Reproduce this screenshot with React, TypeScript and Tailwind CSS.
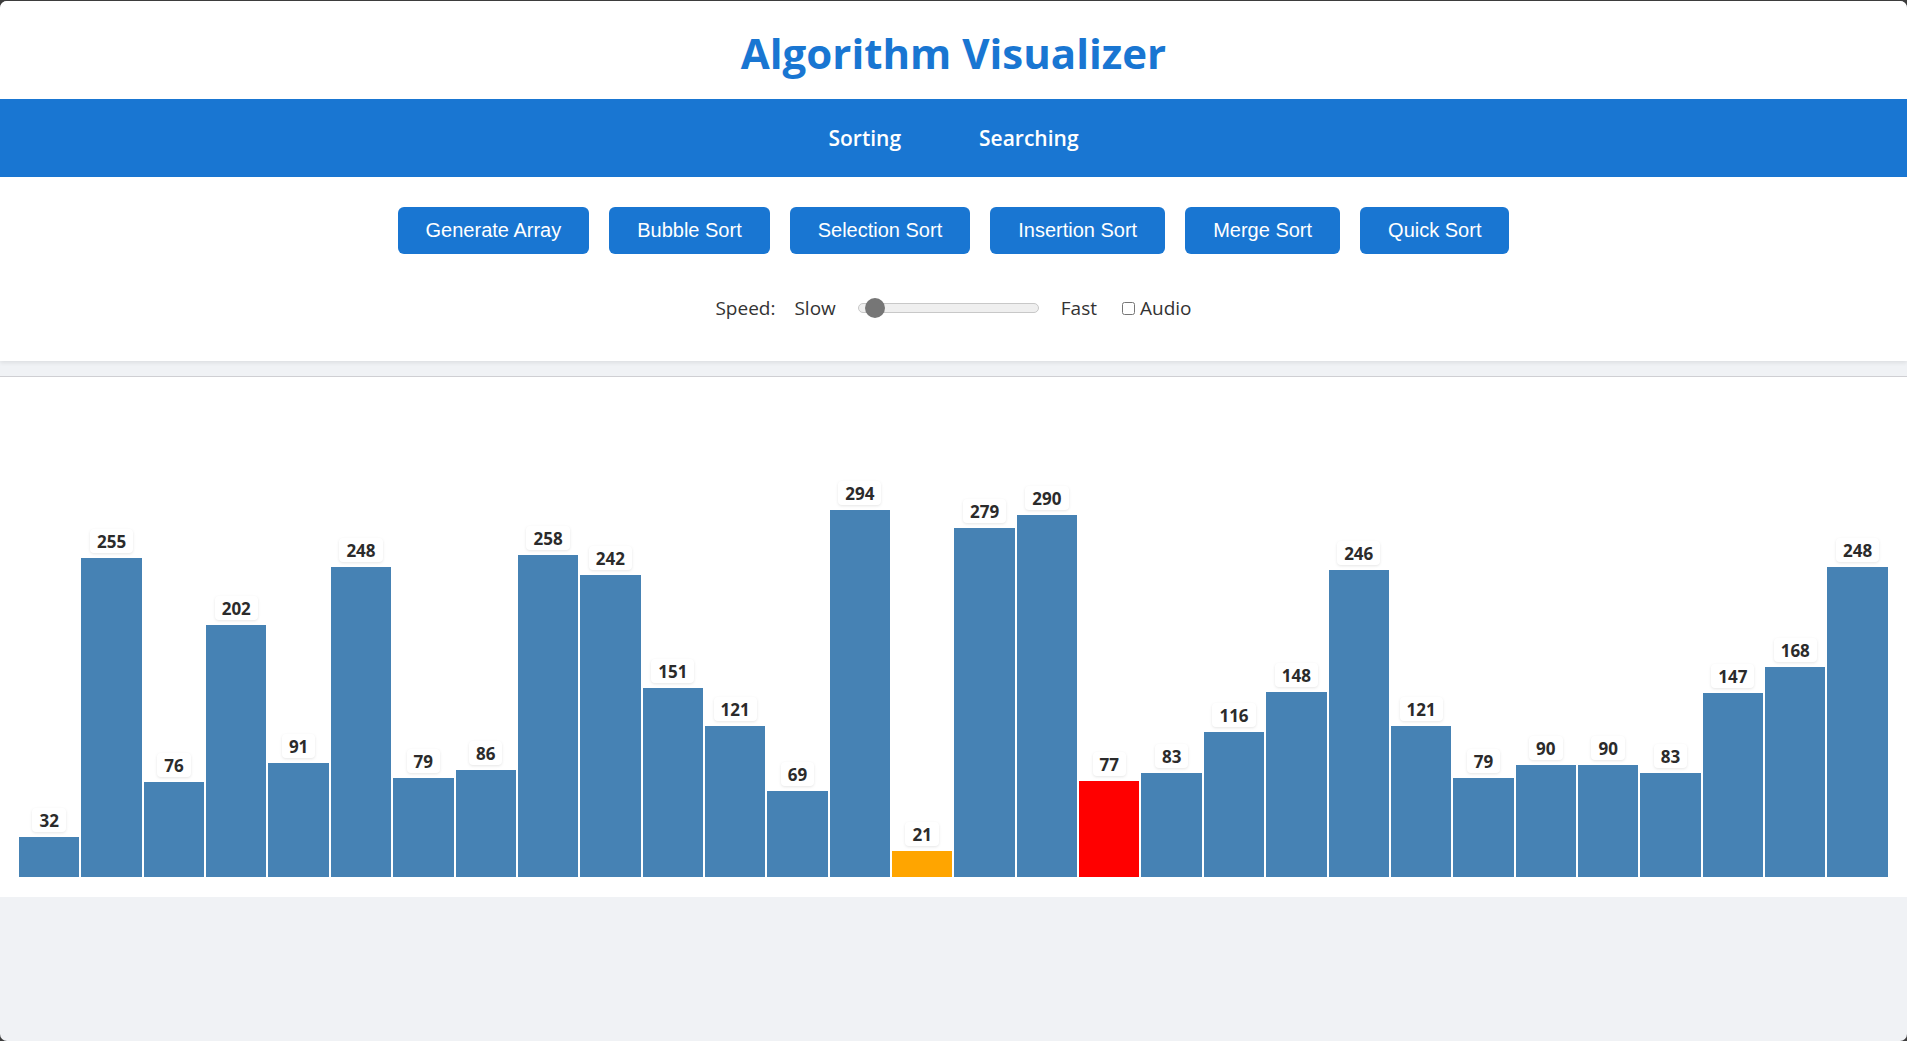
const bars: { v: number; c?: string }[] = [
  { v: 32 }, { v: 255 }, { v: 76 }, { v: 202 }, { v: 91 }, { v: 248 },
  { v: 79 }, { v: 86 }, { v: 258 }, { v: 242 }, { v: 151 }, { v: 121 },
  { v: 69 }, { v: 294 }, { v: 21, c: "bg-[#ffa500]" }, { v: 279 }, { v: 290 },
  { v: 77, c: "bg-[#ff0000]" }, { v: 83 }, { v: 116 }, { v: 148 }, { v: 246 },
  { v: 121 }, { v: 79 }, { v: 90 }, { v: 90 }, { v: 83 }, { v: 147 },
  { v: 168 }, { v: 248 },
];

const buttons = ["Generate Array", "Bubble Sort", "Selection Sort", "Insertion Sort", "Merge Sort", "Quick Sort"];

export default function App() {
  return (
    <div className="h-[1041px] bg-[#3d3d3d] pt-px" style={{ fontFamily: '"Open Sans", sans-serif' }}>
      <div className="flex h-full flex-col overflow-hidden rounded-[7px] bg-[#f0f2f5]">
        <header className="flex h-[98px] items-center justify-center bg-white pt-[4px]">
          <h1 className="text-[42px] font-bold text-[#1976d2]">Algorithm Visualizer</h1>
        </header>

        <nav className="flex h-[78px] items-center justify-center gap-[78px] bg-[#1976d2] pt-[2px] text-[21px] font-semibold text-white">
          <span>Sorting</span>
          <span>Searching</span>
        </nav>

        <section className="flex h-[184px] flex-col items-center bg-white pt-[30px] shadow-[0_2px_4px_rgba(0,0,0,0.08)]">
          <div className="flex gap-[20px]" style={{ fontFamily: '"Liberation Sans", Arial, sans-serif' }}>
            {buttons.map((b) => (
              <button key={b} className="h-[47px] rounded-[6px] bg-[#1976d2] px-[28px] pb-[2px] text-[20px] text-white">
                {b}
              </button>
            ))}
          </div>
          <div className="mt-[39px] flex h-[30px] items-center text-[19px] text-[#333]">
            <span>Speed:</span>
            <span className="ml-[19px]">Slow</span>
            <div className="relative ml-[22px] flex h-[10px] w-[181px] items-center rounded-full border border-[#c8c8c8] bg-[#efefef]">
              <div className="absolute left-[6px] top-1/2 h-[20px] w-[20px] -translate-y-1/2 rounded-full bg-[#767676]" />
            </div>
            <span className="ml-[22px]">Fast</span>
            <input type="checkbox" className="ml-[25px] h-[13px] w-[13px]" />
            <span className="ml-[5px]">Audio</span>
          </div>
        </section>

        <div className="mt-[15px] flex h-[521px] items-end gap-[2px] border-t border-[#cfcfd3] bg-white px-[19px] pb-[20px]">
          {bars.map((b, i) => (
            <div key={i} className="flex flex-1 flex-col items-center justify-end">
              <span className="mb-[5px] rounded-[4px] bg-white px-[7px] pt-[3px] pb-[2px] text-[17px] leading-[19px] font-bold text-[#2b2b2b] shadow-[0_1px_3px_rgba(0,0,0,0.1)]">
                {b.v}
              </span>
              <div className={`w-full ${b.c ?? "bg-[#4682b4]"}`} style={{ height: b.v * 1.25 }} />
            </div>
          ))}
        </div>
      </div>
    </div>
  );
}
